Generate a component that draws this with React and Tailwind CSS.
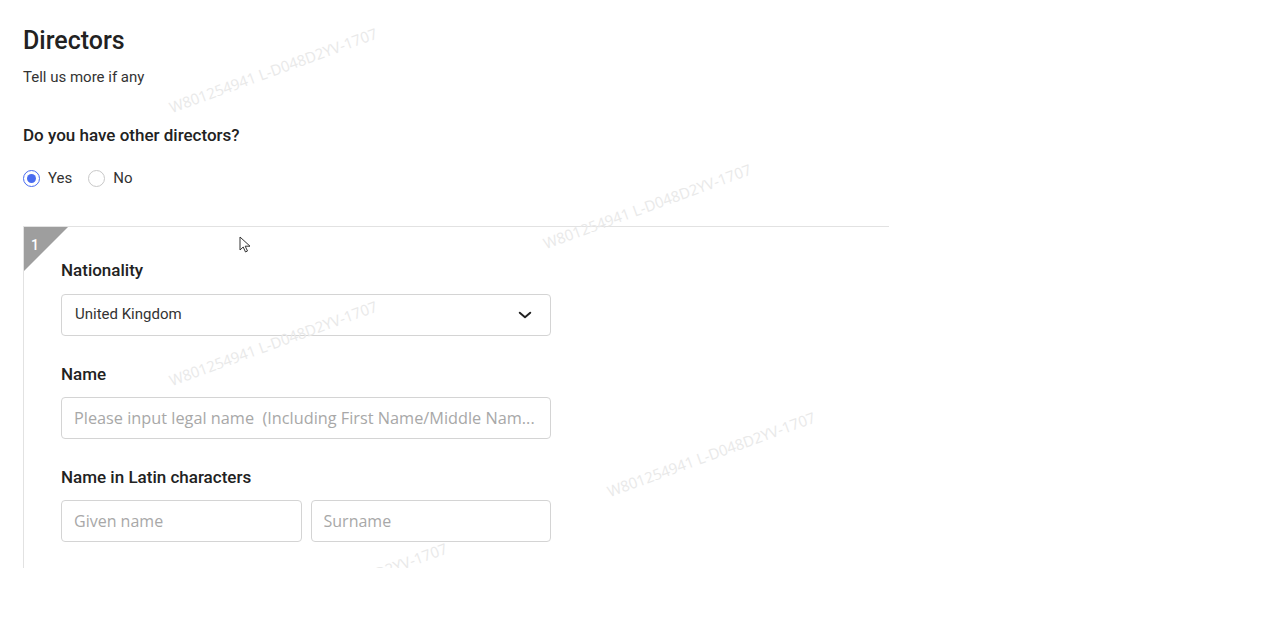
import React, { useState } from "react";

const Watermark = ({ className }) => (
  <div
    className={`pointer-events-none absolute select-none whitespace-nowrap text-[15px] leading-[20px] text-[#e9e9e9] -rotate-[20deg] ${className}`}
    style={{ fontFamily: "'Open Sans', sans-serif" }}
  >
    W801254941 L-D048D2YV-1707
  </div>
);

const Radio = ({ checked, label, onClick }) => (
  <label className="flex items-center gap-[8px] cursor-pointer" onClick={onClick}>
    <span
      className={`flex h-[17px] w-[17px] items-center justify-center rounded-full border ${
        checked ? "border-[#4a6cf0]" : "border-[#c8c8c8]"
      }`}
    >
      {checked && <span className="h-[9px] w-[9px] rounded-full bg-[#4a6cf0]" />}
    </span>
    <span className="text-[15px] text-[#333]">{label}</span>
  </label>
);

const inputCls =
  "h-[42px] w-full rounded-[4px] border border-[#d4d4d4] bg-white px-[12px] text-[#333] outline-none placeholder:text-[#a8a8a8]";

export default function App() {
  const [hasOthers, setHasOthers] = useState(true);

  return (
    <div
      className="relative h-[628px] w-full overflow-hidden bg-white"
      style={{ fontFamily: "Roboto, 'Liberation Sans', sans-serif" }}
    >
      <div className="pl-[23px] pt-[27px]">
        {/* Header */}
        <h1 className="text-[25px] font-medium leading-[28px] text-[#222]">Directors</h1>
        <p className="mt-[14px] text-[15px] leading-[16px] text-[#333]">Tell us more if any</p>

        <div className="mt-[40px] text-[17px] font-medium leading-[20px] text-[#222]">
          Do you have other directors?
        </div>

        <div className="mt-[22px] flex items-center gap-[16px]">
          <Radio checked={hasOthers} label="Yes" onClick={() => setHasOthers(true)} />
          <Radio checked={!hasOthers} label="No" onClick={() => setHasOthers(false)} />
        </div>

        {/* Director card, clipped at the bottom */}
        <div className="relative mt-[36px] h-[342px] w-[866px] overflow-hidden">
          <div className="relative border-l border-t border-[#e2e2e2] pb-[40px] pl-[37px] pt-[33px]">
            <div className="absolute left-0 top-0 h-0 w-0 border-r-[44px] border-t-[44px] border-r-transparent border-t-[#9e9e9e]" />
            <span className="absolute left-[7px] top-[8px] text-[14px] font-medium text-white">1</span>

            <div className="w-[490px]">
              <div className="text-[17px] font-medium leading-[20px] text-[#222]">Nationality</div>
              <button className="mt-[14px] flex h-[42px] w-full items-center justify-between rounded-[4px] border border-[#d4d4d4] bg-white pl-[13px] pr-[16px]">
                <span className="text-[15px] text-[#333]">United Kingdom</span>
                <svg width="18" height="18" viewBox="0 0 24 24" fill="none" stroke="#222" strokeWidth="2.6" strokeLinecap="round" strokeLinejoin="round">
                  <path d="M5 9l7 6 7-6" />
                </svg>
              </button>

              <div className="mt-[28px] text-[17px] font-medium leading-[20px] text-[#222]">Name</div>
              <input
                className={`mt-[13px] ${inputCls} text-[16.3px]`}
                style={{ fontFamily: "'Open Sans', sans-serif" }}
                placeholder="Please input legal name  (Including First Name/Middle Nam..."
              />

              <div className="mt-[28px] text-[17px] font-medium leading-[20px] text-[#222]">
                Name in Latin characters
              </div>
              <div className="mt-[13px] flex gap-[9px]">
                <input
                  className={`${inputCls} text-[16px]`}
                  style={{ fontFamily: "'Open Sans', sans-serif" }}
                  placeholder="Given name"
                />
                <input
                  className={`${inputCls} text-[16px]`}
                  style={{ fontFamily: "'Open Sans', sans-serif" }}
                  placeholder="Surname"
                />
              </div>
            </div>
          </div>
          <Watermark className="left-[210px] top-[349px]" />
        </div>
      </div>

      {/* mouse cursor */}
      <svg className="absolute left-[239px] top-[236px]" width="12" height="18" viewBox="0 0 12 18">
        <path d="M1 1v13l3.2-3 2.3 5 2-1-2.3-4.8H11z" fill="white" stroke="#333" strokeWidth="1" strokeLinejoin="round" />
      </svg>

      <Watermark className="left-[163px] top-[60px]" />
      <Watermark className="left-[537px] top-[196px]" />
      <Watermark className="left-[163px] top-[333px]" />
      <Watermark className="left-[601px] top-[444px]" />
    </div>
  );
}
